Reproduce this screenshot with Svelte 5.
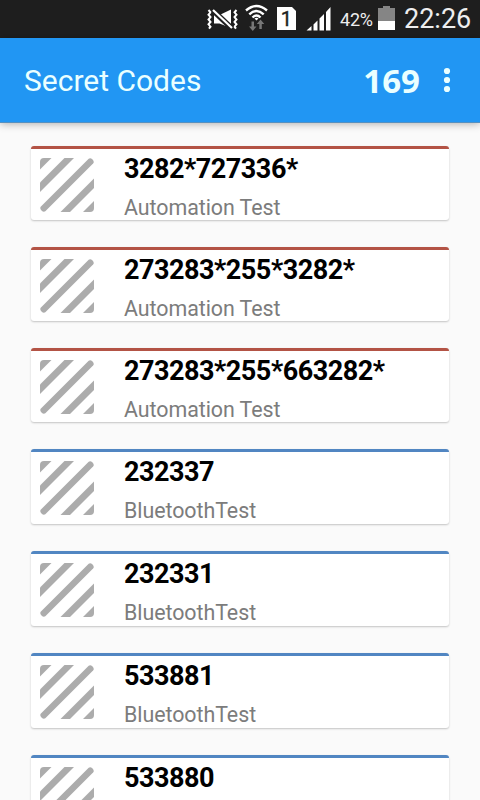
<script>
  const items = [
    { code: '3282*727336*', name: 'Automation Test', kind: 'system' },
    { code: '273283*255*3282*', name: 'Automation Test', kind: 'system' },
    { code: '273283*255*663282*', name: 'Automation Test', kind: 'system' },
    { code: '232337', name: 'BluetoothTest', kind: 'radio' },
    { code: '232331', name: 'BluetoothTest', kind: 'radio' },
    { code: '533881', name: 'BluetoothTest', kind: 'radio' },
    { code: '533880', name: '', kind: 'radio' }
  ];

  let total = 169;
</script>

<div class="screen">
  <div class="status">
    <svg class="icons" width="134" height="38" viewBox="0 0 134 38">
      <!-- vibrate / muted -->
      <g fill="none" stroke="#fff" stroke-width="2">
        <path d="M8.500 10l2 2.300-2 2.400 2 2.400-2 2.400 2 2.400-2 2.400 2 2.400-1.500 2" />
        <path d="M36.500 10l-2 2.300 2 2.400-2 2.400 2 2.400-2 2.400 2 2.400-2 2.400 1.500 2" />
      </g>
      <path fill="#fff" d="M14 15v8.500h5.500L31 28V9.500L19.500 15z" />
      <path d="M13 10.500L32 28.500" stroke="#1e1e1e" stroke-width="5.500" />
      <path d="M13 10L32 28" stroke="#fff" stroke-width="2.200" />
      <!-- wifi -->
      <g fill="none" stroke="#fff" stroke-width="2.4">
        <path d="M46 10.500Q56.500 1.500 67 10.500" />
        <path d="M49.300 14.300Q56.500 7.600 63.700 14.300" />
        <path d="M52.500 17.500Q56.500 13.500 60.500 17.500" />
      </g>
      <path fill="#fff" d="M54.500 18.500q2-1.500 4 0L56.500 20.500z" />
      <path fill="#777" d="M51.500 21.500h2.500v5h2.500L52.800 31 49 26.500h2.500zM59.300 29h2.500v-5h2.500L60.500 19.500l-3.700 4.500h2.500z" />
      <!-- sim slot -->
      <path fill="#fff" d="M77 7h15l4 4v19H77z" />
      <text class="sim" x="86.300" y="26.200" text-anchor="middle">1</text>
      <!-- signal -->
      <path fill="#fff" d="M106.500 30.500l5-4.500v4.500zM113.500 24.500l4-4v10h-4zM119.500 18.500l4.500-4.500v16.500h-4.500zM126 12l4.500-5v23.500H126z" />
    </svg>
    <span class="percent">42%</span>
    <svg class="battery" width="17" height="38" viewBox="0 0 17 38">
      <path fill="#858585" d="M0 8h5V6h7v2h5v13H0z" />
      <path fill="#fff" d="M0 21h17v9H0z" />
    </svg>
    <span class="clock">22:26</span>
  </div>

  <header>
    <h1>Secret Codes</h1>
    <span class="total">{total}</span>
    <svg class="menu" width="8" height="26" viewBox="0 0 8 26">
      <circle cx="4" cy="4" r="3.100" />
      <circle cx="4" cy="13" r="3.100" />
      <circle cx="4" cy="22" r="3.100" />
    </svg>
  </header>

  <main>
    {#each items as item}
      <div class="card {item.kind}">
        <svg class="thumb" width="54" height="54" viewBox="0 0 54 54">
          <path d="M4 0h7.500L0 11.500V4a4 4 0 0 1 4-4z" />
          <path d="M24.500 0h9.500L0 34V24.500z" />
          <path d="M48.700 0.700Q50.500-0.500 52.500 1.500T53.300 5.300L5.300 53.300Q3.500 54.500 1.500 52.500T0.700 48.700z" />
          <path d="M54 20.500v9.500L30 54h-9.500z" />
          <path d="M54 43v7a4 4 0 0 1-4 4h-7z" />
        </svg>
        <div class="text">
          <div class="code">{item.code}</div>
          {#if item.name}<div class="name">{item.name}</div>{/if}
        </div>
      </div>
    {/each}
  </main>
</div>

<style>
  :global(body) {
    background: #fafafa;
    overflow: hidden;
  }
  .screen {
    height: 800px;
    overflow: hidden;
    background: #fafafa;
    font-family: Roboto, sans-serif;
  }
  .status {
    display: flex;
    height: 38px;
    padding-left: 200px;
    background: #1e1e1e;
    color: #eee;
    line-height: 38px;
    white-space: nowrap;
  }
  .icons, .battery, .menu, .thumb {
    display: block;
    flex: none;
  }
  .sim {
    font-size: 20px;
    font-weight: 400;
    fill: #1e1e1e;
    stroke: #1e1e1e;
    stroke-width: 0.4px;
  }
  .percent {
    width: 38px;
    margin-left: 6px;
    font-size: 18px;
    line-height: 40px;
    letter-spacing: -0.2px;
  }
  .clock {
    margin-left: 9px;
    font-size: 27px;
  }
  header {
    display: flex;
    align-items: center;
    height: 84px;
    padding: 0 29px 0 24px;
    background: #2196f3;
    border-bottom: 1px solid #5590c0;
    box-shadow: 0 1px 8px rgba(0, 0, 0, 0.3);
    color: #eaffff;
  }
  h1 {
    flex: 1;
    margin: 0;
    font-size: 30px;
    font-weight: 400;
  }
  .total {
    margin-right: 23px;
    font: 700 33px "Noto Sans", sans-serif;
  }
  .menu { fill: #eaffff; }
  main {
    display: flex;
    flex-direction: column;
    gap: 27px;
    padding: 23px 31px 0;
  }
  .card {
    display: flex;
    flex: none;
    box-sizing: border-box;
    height: 75px;
    padding: 9px 9px 0;
    background: #fff;
    border-top: 3px solid #5186c2;
    border-radius: 3px;
    box-shadow: 0 1px 2px rgba(0, 0, 0, 0.22);
  }
  .card.system {
    height: 74px;
    border-top-color: #b35345;
  }
  .thumb { fill: #acacac; }
  .text {
    margin-left: 30px;
    white-space: nowrap;
  }
  .code {
    margin-top: -5px;
    font-size: 27px;
    font-weight: 700;
    line-height: 32px;
    letter-spacing: -0.48px;
    color: #000;
  }
  .name {
    margin-top: 10px;
    font-size: 21.4px;
    line-height: 26px;
    letter-spacing: -0.05px;
    color: #7c7c7c;
  }
</style>
